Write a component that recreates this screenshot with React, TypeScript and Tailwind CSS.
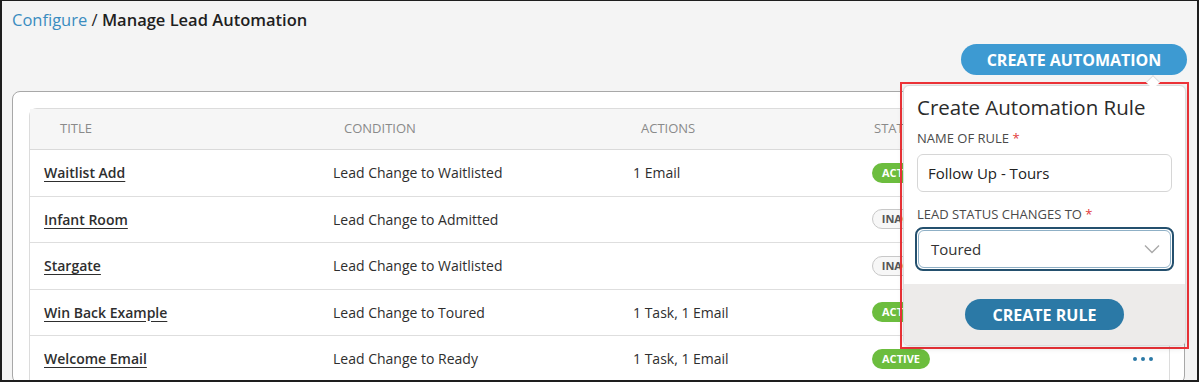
import React from "react";

const font = { fontFamily: '"Open Sans", "Liberation Sans", sans-serif' };

type Row = { title: string; condition: string; actions: string; active: boolean };

const rows: Row[] = [
  { title: "Waitlist Add", condition: "Lead Change to Waitlisted", actions: "1 Email", active: true },
  { title: "Infant Room", condition: "Lead Change to Admitted", actions: "", active: false },
  { title: "Stargate", condition: "Lead Change to Waitlisted", actions: "", active: false },
  { title: "Win Back Example", condition: "Lead Change to Toured", actions: "1 Task, 1 Email", active: true },
  { title: "Welcome Email", condition: "Lead Change to Ready", actions: "1 Task, 1 Email", active: true },
];

const StatusBadge = ({ active }: { active: boolean }) =>
  active ? (
    <span className="inline-flex h-[20px] w-[58px] items-center justify-center rounded-full bg-[#6cbd3e] text-[11px] font-bold text-white">
      ACTIVE
    </span>
  ) : (
    <span className="inline-flex h-[20px] w-[70px] items-center justify-center rounded-full border border-[#c8c8c8] bg-[#f7f7f7] text-[11px] font-bold text-[#555]">
      INACTIVE
    </span>
  );

const AutomationPopover = () => (
  <div className="absolute left-[898px] top-[69px] w-[289px]">
    {/* pointer */}
    <div className="absolute right-[31px] top-[7px] h-[10px] w-[10px] rotate-45 border-l border-t border-[#dcdcdc] bg-white" />
    <div className="mt-[12px] border-2 border-[#ee3338] p-[1px]">
      <div className="overflow-hidden rounded-[6px] border border-[#dcdcdc] bg-white shadow-[0_2px_6px_rgba(0,0,0,0.12)]">
        <div className="px-[13px] pt-[8px] pb-[13px]">
          <h2 className="text-[20.5px] leading-[26px] font-medium text-[#2b2b2b]">Create Automation Rule</h2>
          <div className="mt-[10px] text-[13px] leading-[16px] text-[#4a4a4a]">
            NAME OF RULE <span className="text-[#e23b3b]">*</span>
          </div>
          <div className="mt-[8px] flex h-[38px] items-center rounded-[6px] border border-[#d6d6d6] px-[10px] text-[15px] text-[#222]">
            Follow Up - Tours
          </div>
          <div className="mt-[14px] text-[13px] leading-[16px] text-[#4a4a4a]">
            LEAD STATUS CHANGES TO <span className="text-[#e23b3b]">*</span>
          </div>
          <div className="-mx-[2px] mt-[5px] h-[44px] rounded-[8px] border-2 border-[#24506e] p-[1px]">
            <div className="flex h-full items-center justify-between rounded-[6px] border border-[#8fb0c6] pl-[12px] pr-[10px] text-[15px] text-[#333]">
              <span>Toured</span>
              <svg width="16" height="10" viewBox="0 0 16 10" fill="none">
                <path d="M1 1.5L8 8.5L15 1.5" stroke="#a9a9a9" strokeWidth="1.4" />
              </svg>
            </div>
          </div>
        </div>
        <div className="flex h-[61px] items-center justify-center bg-[#edebea]">
          <button className="h-[31px] w-[159px] rounded-full bg-[#2b79a6] text-[16px] font-bold text-white">
            CREATE RULE
          </button>
        </div>
      </div>
    </div>
  </div>
);

export default function App() {
  return (
    <div
      style={font}
      className="h-[382px] w-[1199px] overflow-hidden border-2 border-t border-[#1e1e1e] bg-[#f4f4f4]"
    >
      <div className="relative pl-[10px] pr-[10px]">
        <div className="pt-[7px] text-[16.5px] leading-[24px]">
          <span className="text-[#3a8cc0]">Configure</span>
          <span className="text-[#1f1f1f]"> / </span>
          <span className="font-semibold text-[#1f1f1f]">Manage Lead Automation</span>
        </div>
        <div className="mt-[12px] flex justify-end">
          <button className="h-[31px] w-[226px] rounded-full bg-[#3d9ad2] text-[16px] font-bold text-white">
            CREATE AUTOMATION
          </button>
        </div>
        <div className="mr-[2px] mt-[16px] rounded-[8px] border border-[#a8a8a8] bg-white pl-[16px] pr-[14px] pt-[16px]">
          <div className="rounded-t-[8px] border border-b-0 border-[#dcdcdc]">
            <div className="grid h-[41px] grid-cols-[288px_300px_239px_1fr] items-center border-b border-[#dadada] bg-[#f6f6f6] text-[13px] text-[#8a8a8a]">
              <div className="pl-[30px]">TITLE</div>
              <div className="pl-[26px]">CONDITION</div>
              <div className="pl-[23px]">ACTIONS</div>
              <div className="pl-[17px]">STATUS</div>
            </div>
            {rows.map((r, i) => (
              <div
                key={i}
                className="grid h-[46.5px] grid-cols-[288px_300px_239px_1fr] items-center border-b border-[#dedede] text-[14px] text-[#2e2e2e]"
              >
                <div className="pl-[14px]">
                  <a className="font-semibold underline underline-offset-[3px]">{r.title}</a>
                </div>
                <div className="pl-[15px]">{r.condition}</div>
                <div className="pl-[15px]">{r.actions}</div>
                <div className="flex items-center justify-between pl-[15px] pr-[16px]">
                  <StatusBadge active={r.active} />
                  <span className="flex gap-[4px]">
                    <span className="h-[4px] w-[4px] rounded-full bg-[#2b79a6]" />
                    <span className="h-[4px] w-[4px] rounded-full bg-[#2b79a6]" />
                    <span className="h-[4px] w-[4px] rounded-full bg-[#2b79a6]" />
                  </span>
                </div>
              </div>
            ))}
          </div>
        </div>
        <AutomationPopover />
      </div>
    </div>
  );
}
